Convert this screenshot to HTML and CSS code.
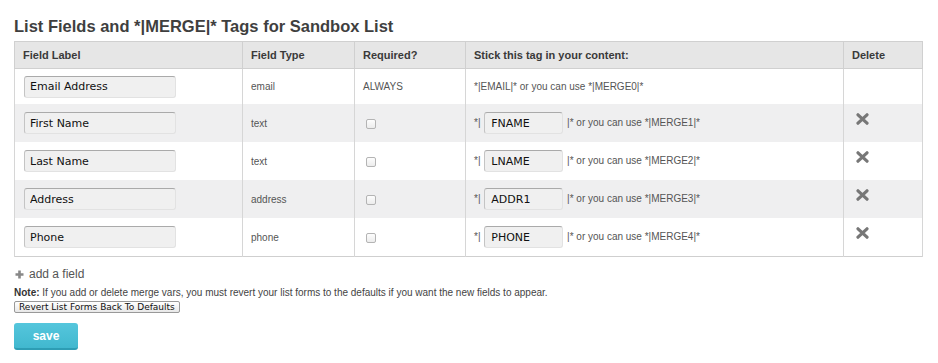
FILE: index.html
```html
<!DOCTYPE html>
<html>
<head>
  <link rel="stylesheet" href="styles.css">
</head>
<body>
  <h2 class="title">List Fields and *|MERGE|* Tags for Sandbox List</h2>
  <form id="fieldsForm">
    <table class="fields">
      <thead>
        <tr>
          <th class="col-label">Field Label</th>
          <th class="col-type">Field Type</th>
          <th class="col-req">Required?</th>
          <th class="col-tag">Stick this tag in your content:</th>
          <th class="col-del">Delete</th>
        </tr>
      </thead>
      <tbody>
        <tr class="first">
          <td><input type="text" class="label-input" value="Email Address"></td>
          <td class="small">email</td>
          <td class="small">ALWAYS</td>
          <td class="small">*|EMAIL|* or you can use *|MERGE0|*</td>
          <td></td>
        </tr>
        <tr class="alt">
          <td><input type="text" class="label-input" value="First Name"></td>
          <td class="small">text</td>
          <td><input type="checkbox" class="req"></td>
          <td class="small">*| <input type="text" class="tag-input" value="FNAME"> |* or you can use *|MERGE1|*</td>
          <td class="del"><a href="#" class="del-btn"><svg width="13" height="12" viewBox="0 0 13 12"><path d="M2 1.8 L11 10.2 M11 1.8 L2 10.2" stroke="#777" stroke-width="3.2" stroke-linecap="round"/></svg></a></td>
        </tr>
        <tr>
          <td><input type="text" class="label-input" value="Last Name"></td>
          <td class="small">text</td>
          <td><input type="checkbox" class="req"></td>
          <td class="small">*| <input type="text" class="tag-input" value="LNAME"> |* or you can use *|MERGE2|*</td>
          <td class="del"><a href="#" class="del-btn"><svg width="13" height="12" viewBox="0 0 13 12"><path d="M2 1.8 L11 10.2 M11 1.8 L2 10.2" stroke="#777" stroke-width="3.2" stroke-linecap="round"/></svg></a></td>
        </tr>
        <tr class="alt">
          <td><input type="text" class="label-input" value="Address"></td>
          <td class="small">address</td>
          <td><input type="checkbox" class="req"></td>
          <td class="small">*| <input type="text" class="tag-input" value="ADDR1"> |* or you can use *|MERGE3|*</td>
          <td class="del"><a href="#" class="del-btn"><svg width="13" height="12" viewBox="0 0 13 12"><path d="M2 1.8 L11 10.2 M11 1.8 L2 10.2" stroke="#777" stroke-width="3.2" stroke-linecap="round"/></svg></a></td>
        </tr>
        <tr>
          <td><input type="text" class="label-input" value="Phone"></td>
          <td class="small">phone</td>
          <td><input type="checkbox" class="req"></td>
          <td class="small">*| <input type="text" class="tag-input" value="PHONE"> |* or you can use *|MERGE4|*</td>
          <td class="del"><a href="#" class="del-btn"><svg width="13" height="12" viewBox="0 0 13 12"><path d="M2 1.8 L11 10.2 M11 1.8 L2 10.2" stroke="#777" stroke-width="3.2" stroke-linecap="round"/></svg></a></td>
        </tr>
      </tbody>
    </table>

    <a href="#" class="add-field"><svg class="plus" width="9" height="9" viewBox="0 0 9 9"><path d="M4.5 0.5 V8.5 M0.5 4.5 H8.5" stroke="#888" stroke-width="2.6"/></svg>add a field</a>
    <p class="note"><strong>Note:</strong> If you add or delete merge vars, you must revert your list forms to the defaults if you want the new fields to appear.</p>
    <button type="button" class="revert-btn">Revert List Forms Back To Defaults</button>
    <div class="actions">
      <button type="submit" class="save-btn">save</button>
    </div>
  </form>
</body>
</html>
```

FILE: styles.css
```css
/* page */
body {
  margin: 0;
  padding: 0 14px;
  font-family: "Liberation Sans", Arial, sans-serif;
  color: #444;
  background-color: #fff;
}

.title {
  margin: 16px 0 5px;
  font-size: 16.5px;
  line-height: 20px;
  font-weight: bold;
  color: #3f3f3f;
}

/* fields table */
.fields {
  width: 909px;
  border-collapse: collapse;
  border: 1px solid #cfcfcf;
}

.fields th {
  height: 26px;
  padding: 0 8px;
  text-align: left;
  font-size: 11px;
  font-weight: bold;
  color: #3a3a3a;
  background-color: #e6e6e6;
  border: 1px solid #d0d0d0;
}

.fields td {
  height: 38px;
  padding: 0 8px;
  vertical-align: middle;
  border-left: 1px solid #d6d6d6;
  border-right: 1px solid #d6d6d6;
}

.fields tr.first td {
  height: 35px;
}

.fields tr.alt td {
  background-color: #efeff0;
}

.col-label { width: 211px; }
.col-type { width: 95px; }
.col-req { width: 94px; }
.col-tag { width: 361px; }
.col-del { width: 62px; }

.small {
  font-size: 10px;
  color: #555;
}

.label-input {
  box-sizing: border-box;
  width: 152px;
  height: 22px;
  margin: 0 0 0 1px;
  padding: 0 5px;
  font-family: "DejaVu Sans", Verdana, sans-serif;
  font-size: 11px;
  color: #111;
  background-color: #f0f0f0;
  border: 1px solid #e2e2e2;
  border-top-color: #aaa;
  border-left-color: #c4c4c4;
  border-radius: 3px;
  vertical-align: middle;
}

.tag-input {
  box-sizing: border-box;
  width: 79px;
  height: 22px;
  margin: 0 1px;
  padding: 0 6px;
  font-family: "DejaVu Sans", Verdana, sans-serif;
  font-size: 11px;
  color: #111;
  background-color: #f0f0f0;
  border: 1px solid #e2e2e2;
  border-top-color: #aaa;
  border-left-color: #c4c4c4;
  border-radius: 3px;
  vertical-align: middle;
}

.req {
  -webkit-appearance: none;
  appearance: none;
  box-sizing: border-box;
  width: 10px;
  height: 10px;
  margin: 0 0 0 3px;
  background: linear-gradient(#fdfdfd, #ececec);
  border: 1px solid #b4b4b4;
  border-radius: 2px;
  vertical-align: middle;
}

.fields td.del {
  vertical-align: top;
  padding: 0 0 0 12px;
}

.del-btn {
  display: inline-block;
  margin-top: 9px;
  line-height: 0;
}

/* below the table */
.add-field {
  display: inline-block;
  margin: 10px 0 0 1px;
  font-size: 12px;
  color: #555;
  text-decoration: none;
}

.plus {
  margin-right: 5px;
  vertical-align: -1px;
}

.note {
  margin: 5px 0 3px;
  font-size: 10px;
  color: #444;
}

.note strong {
  color: #333;
}

.revert-btn {
  display: block;
  height: 12px;
  padding: 0 4px;
  font-family: "DejaVu Sans", Verdana, sans-serif;
  font-size: 9px;
  line-height: 10px;
  color: #111;
  background: linear-gradient(#fff, #e8e8e8);
  border: 1px solid #999;
  border-radius: 2px;
}

.actions {
  margin-top: 10px;
}

.save-btn {
  width: 64px;
  height: 27px;
  padding: 0;
  font-family: "Liberation Sans", Arial, sans-serif;
  font-size: 12px;
  font-weight: bold;
  color: #fff;
  background: linear-gradient(#55c6dc, #41b8cf);
  border: none;
  border-bottom: 2px solid #2d9db4;
  border-radius: 3px;
}
```
